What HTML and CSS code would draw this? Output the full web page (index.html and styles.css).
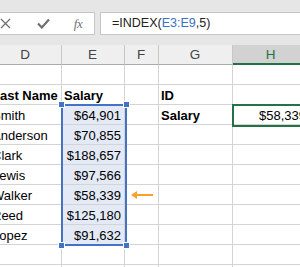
FILE: index.html
```html
<!DOCTYPE html>
<html lang="en">
<head>
    <meta charset="UTF-8">
    <title>INDEX example</title>
    <link rel="stylesheet" href="styles.css">
</head>
<body>

<div class="formula-bar">
    <div class="tools">
        <span class="tool">
            <svg width="11" height="11" viewBox="0 0 11 11"><path d="M1 1 L10 10 M10 1 L1 10" stroke="#6f6f6f" stroke-width="1.3" fill="none"/></svg>
        </span>
        <span class="tool">
            <svg width="13" height="11" viewBox="0 0 13 11"><path d="M1 5.5 L4.8 9.5 L12 1.5" stroke="#6f6f6f" stroke-width="2.2" fill="none"/></svg>
        </span>
        <span class="tool fx">fx</span>
    </div>
    <div class="formula">=INDEX(<span class="ref">E3:E9</span>,5)</div>
</div>

<div class="sheet">
    <div class="row head">
        <div class="cell">D</div>
        <div class="cell">E</div>
        <div class="cell">F</div>
        <div class="cell">G</div>
        <div class="cell active-col">H</div>
    </div>
    <div class="row">
        <div class="cell"></div><div class="cell"></div><div class="cell"></div><div class="cell"></div><div class="cell"></div>
    </div>
    <div class="row">
        <div class="cell bold">Last Name</div>
        <div class="cell bold">Salary</div>
        <div class="cell"></div>
        <div class="cell bold">ID</div>
        <div class="cell"></div>
    </div>
    <div class="row">
        <div class="cell">Smith</div>
        <div class="cell num sel">$64,901</div>
        <div class="cell"></div>
        <div class="cell bold">Salary</div>
        <div class="cell num">$58,339</div>
    </div>
    <div class="row">
        <div class="cell">Anderson</div>
        <div class="cell num sel">$70,855</div>
        <div class="cell"></div><div class="cell"></div><div class="cell"></div>
    </div>
    <div class="row">
        <div class="cell">Clark</div>
        <div class="cell num sel">$188,657</div>
        <div class="cell"></div><div class="cell"></div><div class="cell"></div>
    </div>
    <div class="row">
        <div class="cell">Lewis</div>
        <div class="cell num sel">$97,566</div>
        <div class="cell"></div><div class="cell"></div><div class="cell"></div>
    </div>
    <div class="row">
        <div class="cell">Walker</div>
        <div class="cell num sel">$58,339</div>
        <div class="cell"></div><div class="cell"></div><div class="cell"></div>
    </div>
    <div class="row">
        <div class="cell">Reed</div>
        <div class="cell num sel">$125,180</div>
        <div class="cell"></div><div class="cell"></div><div class="cell"></div>
    </div>
    <div class="row">
        <div class="cell">Lopez</div>
        <div class="cell num sel">$91,632</div>
        <div class="cell"></div><div class="cell"></div><div class="cell"></div>
    </div>
    <div class="row">
        <div class="cell"></div><div class="cell"></div><div class="cell"></div><div class="cell"></div><div class="cell"></div>
    </div>
    <div class="row">
        <div class="cell"></div><div class="cell"></div><div class="cell"></div><div class="cell"></div><div class="cell"></div>
    </div>

    <!-- overlays -->
    <div class="range">
        <span class="handle tl"></span>
        <span class="handle tr"></span>
        <span class="handle bl"></span>
        <span class="handle br"></span>
    </div>
    <div class="active-cell"></div>
    <svg class="arrow" width="22" height="10" viewBox="0 0 22 10">
        <path d="M2 5 H22" stroke="#f7a12a" stroke-width="2" fill="none"/>
        <path d="M0 5 L6 1 L6 9 Z" fill="#f7a12a"/>
    </svg>
</div>

</body>
</html>
```

FILE: styles.css
```css
body {
    margin: 0;
    width: 300px;
    height: 267px;
    overflow: hidden;
    background: #fff;
    font-family: 'Liberation Sans', Arial, sans-serif;
}
.formula-bar {
    background: #e6e6e6;
    height: 45px;
    padding-top: 12px;
    box-sizing: border-box;
    display: flex;
    gap: 5px;
    margin-left: -10px;
    width: 310px;
    overflow: hidden;
}
.tools {
    width: 105px;
    height: 23px;
    background: #fff;
    border: 1px solid #c6c6c6;
    box-sizing: border-box;
    display: grid;
    grid-template-columns: 28px 48px 22px;
    align-items: center;
}
.tool {
    display: flex;
    justify-content: center;
    align-items: center;
}
.fx {
    font-family: 'Liberation Serif', serif;
    font-style: italic;
    font-size: 13px;
    color: #6f6f6f;
    letter-spacing: -0.5px;
}
.formula {
    flex: 1;
    height: 23px;
    background: #fff;
    border: 1px solid #c6c6c6;
    border-right: none;
    box-sizing: border-box;
    padding-left: 11px;
    font-size: 12.5px;
    line-height: 21px;
    color: #222;
}
.ref {
    color: #3a6fc4;
}
.sheet {
    position: relative;
    margin-left: -10px;
    width: 310px;
    height: 222px;
    overflow: hidden;
}
.row {
    display: grid;
    grid-template-columns: 72px 63px 34px 74px 77px;
    height: 20px;
}
.cell {
    box-sizing: border-box;
    border-right: 1px solid #d4d4d4;
    border-bottom: 1px solid #d4d4d4;
    font-size: 13px;
    line-height: 21px;
    padding: 0 3px 0 2px;
    white-space: nowrap;
    overflow: hidden;
    color: #000;
}
.head .cell {
    background: #efefef;
    border-right-color: #c8c8c8;
    border-bottom-color: #ababab;
    text-align: center;
    color: #444;
    font-size: 13.5px;
    line-height: 20px;
}
.head .active-col {
    background: #d2d2d2;
    color: #217346;
    border-bottom: 2px solid #217346;
}
.bold {
    font-weight: bold;
}
.num {
    text-align: right;
}
.sel {
    background: #e3eaf5;
}
.range {
    position: absolute;
    left: 71px;
    top: 59px;
    width: 66px;
    height: 142px;
    border: 2px solid #4472c4;
    box-sizing: border-box;
}
.handle {
    position: absolute;
    width: 5px;
    height: 5px;
    background: #4472c4;
    border: 1px solid #fff;
}
.tl { left: -5px; top: -5px; }
.tr { right: -5px; top: -5px; }
.bl { left: -5px; bottom: -5px; }
.br { right: -5px; bottom: -5px; }
.active-cell {
    position: absolute;
    left: 242px;
    top: 59px;
    width: 90px;
    height: 23px;
    border: 2px solid #217346;
    box-sizing: border-box;
}
.arrow {
    position: absolute;
    left: 141px;
    top: 145px;
}
```
